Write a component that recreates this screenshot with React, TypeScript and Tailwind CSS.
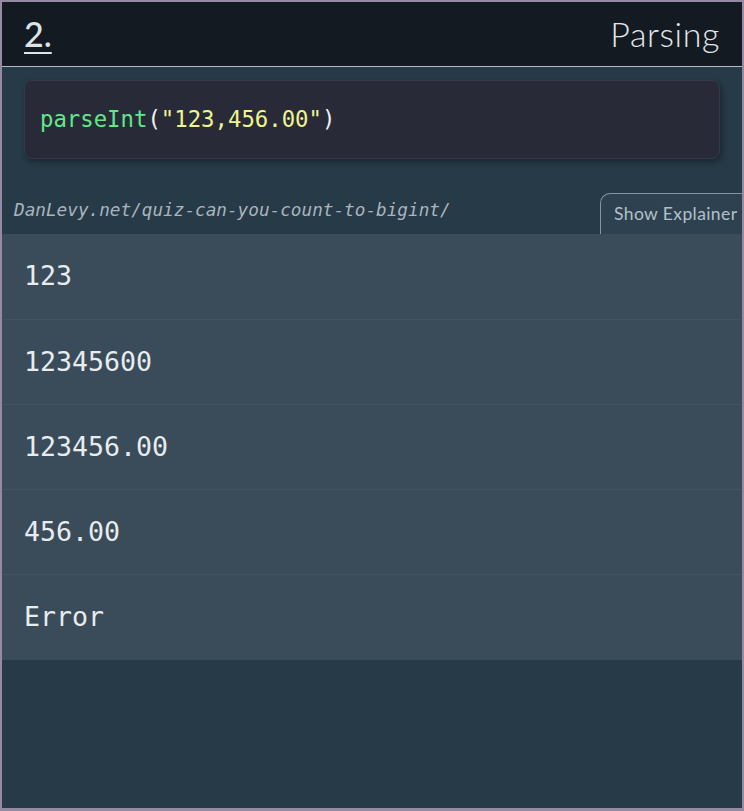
import React from "react";

const options = ["123", "12345600", "123456.00", "456.00", "Error"];

export default function App() {
  return (
    <div className="w-[744px] h-[811px] border-2 border-b-[3px] border-[#968aa2] bg-[#273a48] flex flex-col overflow-hidden">
      <header className="h-[65px] shrink-0 bg-[#131a21] border-b border-[#b4bac2] flex items-center justify-between pl-[22px] pr-[22px]">
        <span className="text-[34px] font-medium text-[#dfe3e7] underline underline-offset-[5px] decoration-2 leading-none" style={{ fontFamily: "Lato, 'Open Sans', sans-serif" }}>
          2.
        </span>
        <span className="text-[34px] font-light tracking-[0.6px] text-[#e4e7ea] leading-none" style={{ fontFamily: "Lato, 'Open Sans', sans-serif" }}>
          Parsing
        </span>
      </header>

      <div className="px-[22px] pt-[13px]">
        <div className="h-[79px] rounded-[8px] bg-[#292a38] border border-[#353849] shadow-[2px_3px_6px_rgba(0,0,0,0.35)] flex items-center pl-[15px]">
          <code className="text-[22.3px] leading-none" style={{ fontFamily: "'DejaVu Sans Mono', monospace" }}>
            <span className="text-[#5ee88a]">parseInt</span>
            <span className="text-[#f1f1ec]">(</span>
            <span className="text-[#eef58e]">"123,456.00"</span>
            <span className="text-[#f1f1ec]">)</span>
          </code>
        </div>
      </div>

      <div className="mt-[34px] h-[41px] flex items-end">
        <span className="ml-[12px] mb-[12px] text-[17.7px] italic leading-[24px] text-[#aab4bd]" style={{ fontFamily: "'DejaVu Sans Mono', monospace" }}>
          DanLevy.net/quiz-can-you-count-to-bigint/
        </span>
        <div className="ml-auto w-[142px] h-[41px] shrink-0 border-l border-t border-[#8795a2] rounded-tl-[10px] bg-[#2e4150] flex items-center pl-[13px]">
          <span className="text-[17.5px] tracking-[0.4px] text-[#b3c0ca] whitespace-nowrap" style={{ fontFamily: "Lato, 'Open Sans', sans-serif" }}>
            Show Explainer
          </span>
        </div>
      </div>

      <div className="bg-[#3a4b59]">
        {options.map((o, i) => (
          <div
            key={o}
            className={
              i === 0
                ? "h-[85px] flex items-center pl-[22px]"
                : i === options.length - 1
                ? "h-[86px] flex items-center pl-[22px] border-t border-[#44545f]"
                : "h-[85px] flex items-center pl-[22px] border-t border-[#44545f]"
            }
          >
            <span className="text-[26.6px] text-[#e8ecef] leading-none" style={{ fontFamily: "'DejaVu Sans Mono', monospace" }}>
              {o}
            </span>
          </div>
        ))}
      </div>
    </div>
  );
}
